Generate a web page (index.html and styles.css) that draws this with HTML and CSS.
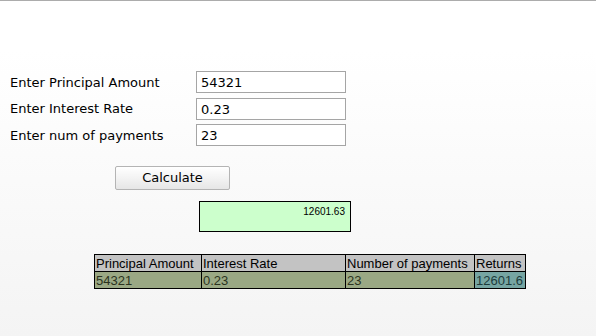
FILE: index.html
```html
<!DOCTYPE html>
<html>
<head>
<meta charset="utf-8">
<title>Interest Calculator</title>
<link rel="stylesheet" href="styles.css">
</head>
<body>
<div class="page">
  <form class="calc-form">
    <label class="field-label" for="principal">Enter Principal Amount</label>
    <input class="field-input" id="principal" type="text" value="54321">
    <label class="field-label" for="rate">Enter Interest Rate</label>
    <input class="field-input" id="rate" type="text" value="0.23">
    <label class="field-label" for="payments">Enter num of payments</label>
    <input class="field-input" id="payments" type="text" value="23">
  </form>
  <div class="actions">
    <button class="calc-button" type="button">Calculate</button>
  </div>
  <div class="result-wrap">
    <div class="result-box">12601.63</div>
  </div>
  <div class="table-wrap">
    <table class="results-table">
      <thead>
        <tr class="head-row">
          <th class="col-principal"><div class="cell">Principal Amount</div></th>
          <th class="col-rate"><div class="cell">Interest Rate</div></th>
          <th class="col-payments"><div class="cell">Number of payments</div></th>
          <th class="col-returns"><div class="cell">Returns</div></th>
        </tr>
      </thead>
      <tbody>
        <tr class="data-row">
          <td><div class="cell">54321</div></td>
          <td><div class="cell">0.23</div></td>
          <td><div class="cell">23</div></td>
          <td class="returns-cell"><div class="cell">12601.6</div></td>
        </tr>
      </tbody>
    </table>
  </div>
</div>
</body>
</html>
```
FILE: styles.css
```css
html, body {
  margin: 0;
  padding: 0;
  height: 100%;
}
body {
  border-top: 1px solid #acacac;
  box-sizing: border-box;
  background: linear-gradient(to bottom, #ffffff 0%, #ffffff 15%, #f4f4f4 100%);
  font-family: "DejaVu Sans", Verdana, sans-serif;
  font-size: 13px;
  color: #000;
}
.page {
  padding-top: 70px;
}
.calc-form {
  display: grid;
  grid-template-columns: 186px 150px;
  grid-auto-rows: 22px;
  row-gap: 4.5px;
  padding-left: 10px;
  align-items: center;
}
.field-label {
  font-size: 13px;
  line-height: 22px;
  padding-top: 1px;
}
.field-input {
  box-sizing: border-box;
  width: 150px;
  height: 22px;
  margin: 0;
  border: 1px solid #a5a5a5;
  background: #fff;
  padding: 1px 4px 0;
  font-family: "DejaVu Sans", Verdana, sans-serif;
  font-size: 13px;
  color: #000;
}
.actions {
  padding-left: 115px;
  margin-top: 20px;
}
.calc-button {
  box-sizing: border-box;
  width: 115px;
  height: 24px;
  margin: 0;
  border: 1px solid #b4b4b4;
  border-radius: 2px;
  background: linear-gradient(to bottom, #ffffff 0%, #f3f3f3 50%, #e6e6e6 100%);
  font-family: "DejaVu Sans", Verdana, sans-serif;
  font-size: 13px;
  color: #000;
  padding: 0 0 2px;
}
.result-wrap {
  padding-left: 199px;
  margin-top: 11px;
}
.result-box {
  box-sizing: border-box;
  width: 152px;
  height: 31px;
  border: 1px solid #000;
  background: #ccffcc;
  font-family: "Liberation Sans", Arial, sans-serif;
  font-size: 10px;
  text-align: right;
  padding: 4px 5px 0 0;
  line-height: 12px;
}
.table-wrap {
  padding-left: 94px;
  margin-top: 22px;
}
.results-table {
  border-collapse: collapse;
  font-family: "Liberation Sans", Arial, sans-serif;
  font-size: 13px;
}
.results-table th,
.results-table td {
  border: 1px solid #000;
  padding: 0 1px;
  height: 16px;
  text-align: left;
  font-weight: normal;
  white-space: nowrap;
  vertical-align: top;
}
.cell {
  height: 16px;
  line-height: 18px;
  overflow: hidden;
}
.head-row {
  background: #c3c3c3;
}
.data-row {
  background: #9aa884;
  color: #2b3320;
}
.col-principal { width: 104px; }
.col-rate { width: 141px; }
.col-payments { width: 126px; }
.col-returns { width: 48px; }
.returns-cell {
  background: #76a5a2;
  color: #1c3b3b;
}
```
